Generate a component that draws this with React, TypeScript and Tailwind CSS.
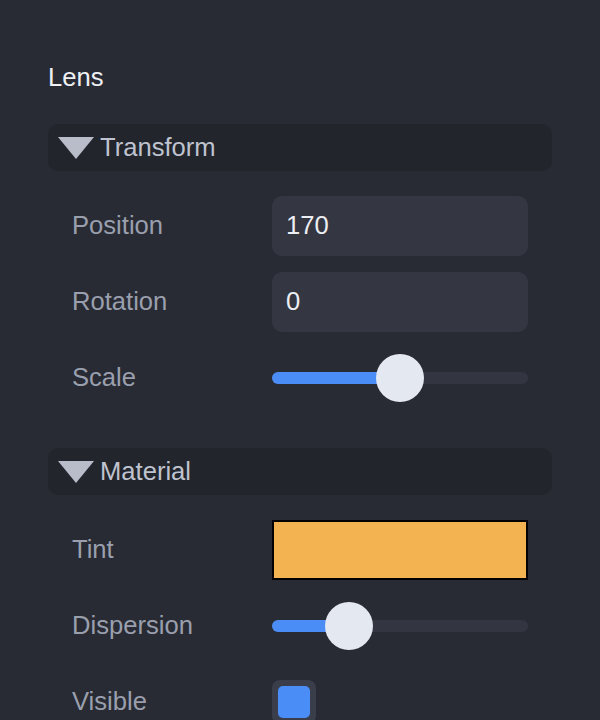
import React from "react";

const FONT = { fontFamily: '"Liberation Sans", Arial, sans-serif' };

function SectionHeader({ title }: { title: string }) {
  return (
    <div className="flex h-[47px] items-center gap-[6px] rounded-[10px] bg-[#22252c] pl-[10px]">
      <svg width="36" height="22" viewBox="0 0 36 22" className="shrink-0">
        <polygon points="0,0 36,0 18,22" fill="#b9bdca" />
      </svg>
      <span className="text-[25.6px] leading-none text-[#bfc3cf]">{title}</span>
    </div>
  );
}

function Row({ label, children }: { label: string; children: React.ReactNode }) {
  return (
    <div className="flex h-[60px] items-center pl-[24px] pr-[24px]">
      <span className="w-[200px] shrink-0 text-[25.6px] leading-none text-[#9a9fae]">
        {label}
      </span>
      <div className="flex flex-1 items-center">{children}</div>
    </div>
  );
}

function TextField({ value }: { value: string }) {
  return (
    <div className="flex h-[60px] w-full items-center rounded-[10px] bg-[#343641] px-[14px] text-[25.6px] leading-none text-[#eceef3]">
      {value}
    </div>
  );
}

function Slider({ percent }: { percent: number }) {
  return (
    <div className="relative flex h-[48px] w-full items-center">
      <div className="h-[12px] w-full rounded-full bg-[#333541]">
        <div
          className="h-full rounded-full bg-[#4b8df6]"
          style={{ width: `${percent}%` }}
        />
      </div>
      <div
        className="absolute top-0 h-[48px] w-[48px] -translate-x-1/2 rounded-full bg-[#e4e8f1]"
        style={{ left: `${percent}%` }}
      />
    </div>
  );
}

export default function App() {
  return (
    <div className="min-h-screen bg-[#282b33] px-[48px] pt-[60px]" style={FONT}>
      <div className="flex h-[36px] items-center text-[25.6px] leading-none text-[#eef0f4]">
        Lens
      </div>

      <div className="mt-[28px]">
        <SectionHeader title="Transform" />
        <div className="mt-[25px] flex flex-col gap-[16px]">
          <Row label="Position">
            <TextField value="170" />
          </Row>
          <Row label="Rotation">
            <TextField value="0" />
          </Row>
          <Row label="Scale">
            <Slider percent={50} />
          </Row>
        </div>
      </div>

      <div className="mt-[40px]">
        <SectionHeader title="Material" />
        <div className="mt-[25px] flex flex-col gap-[16px]">
          <Row label="Tint">
            <div className="h-[60px] w-full border-2 border-black bg-[#f2b350]" />
          </Row>
          <Row label="Dispersion">
            <Slider percent={30} />
          </Row>
          <Row label="Visible">
            <div className="flex h-[44px] w-[44px] items-center justify-center rounded-[8px] bg-[#3a3d4a]">
              <div className="h-[32px] w-[32px] rounded-[5px] bg-[#4b8df6]" />
            </div>
          </Row>
        </div>
      </div>
    </div>
  );
}
